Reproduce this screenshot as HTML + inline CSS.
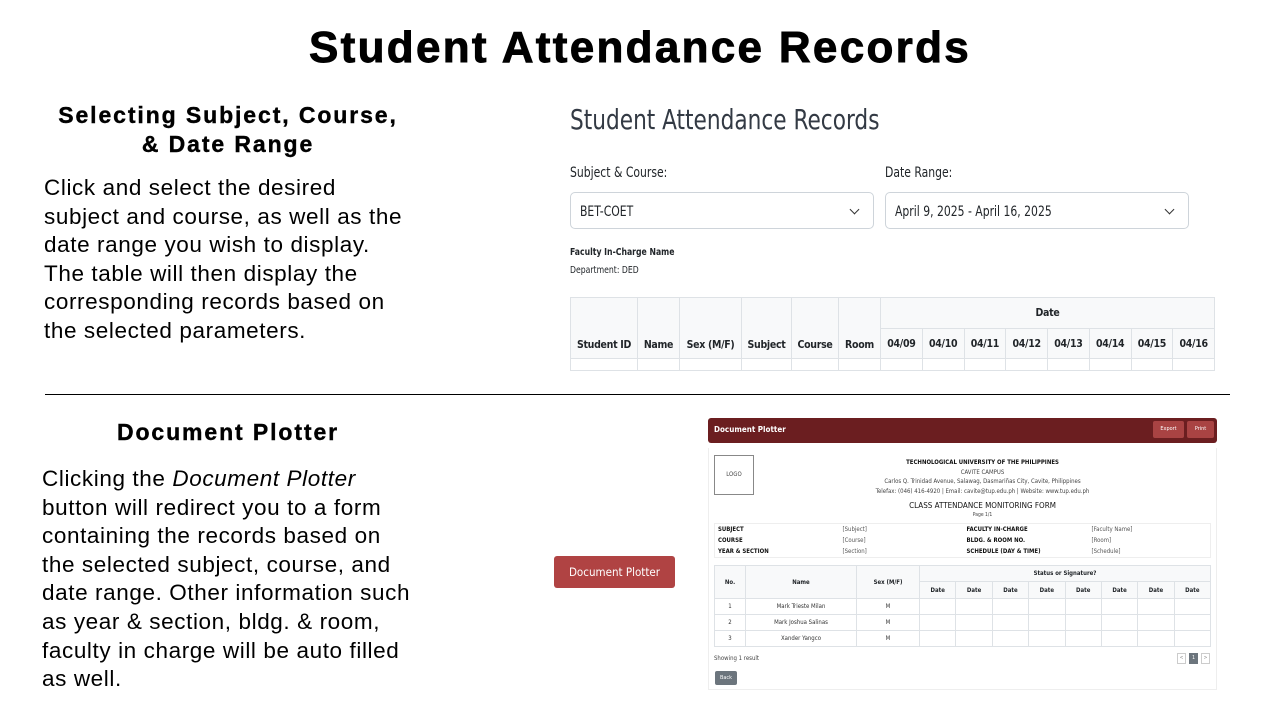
<!DOCTYPE html>
<html><head><meta charset="utf-8"><style>
*{margin:0;padding:0;box-sizing:border-box}
body{width:1280px;height:720px;background:#fff;position:relative;overflow:hidden;font-family:"Liberation Sans",Arial,sans-serif;color:#000}
.a{position:absolute}
h1{position:absolute;left:0;width:1280px;top:23px;text-align:center;font-size:44px;font-weight:bold;letter-spacing:2.3px;-webkit-text-stroke:0.9px #000}
.h2{position:absolute;text-align:center;font-weight:bold;font-size:23px;line-height:29px;letter-spacing:1.9px;-webkit-text-stroke:0.4px #000}
.p{position:absolute;font-size:22.5px;line-height:28.6px;letter-spacing:0.6px}
.ui{font-family:"DejaVu Sans Condensed","Liberation Sans",sans-serif;color:#212529}
.sx{display:inline-block;transform-origin:left center;transform:scaleX(0.86);white-space:nowrap}
table{border-collapse:collapse;position:absolute}
td,th{border:1px solid #dee2e6;text-align:center}
.t1 th{font-size:10.5px;font-weight:bold;background:#f8f9fa;letter-spacing:-0.3px}
.t3 th{font-size:6px;font-weight:bold;background:#f8f9fa}
.t3 td{font-size:6px;color:#333}
.t2 td{border:none;font-size:6px;text-align:left;padding-left:3px;color:#555}
.t2 td.b{font-weight:bold;color:#111}
.sel{position:absolute;border:1px solid #ced4da;border-radius:5px;font-size:14px;padding:11px 9px;height:37px}
.sel:after{content:"";position:absolute;right:15px;top:13px;width:6px;height:6px;border-right:1.5px solid #333;border-bottom:1.5px solid #333;transform:rotate(45deg)}
</style></head><body>
<h1>Student Attendance Records</h1>
<div class="h2" style="left:28px;width:400px;top:101px">Selecting Subject, Course,<br>&amp; Date Range</div>
<div class="p" style="left:44px;top:174px">Click and select the desired<br>subject and course, as well as the<br>date range you wish to display.<br>The table will then display the<br>corresponding records based on<br>the selected parameters.</div>
<div class="a" style="left:45px;top:394px;width:1185px;height:1px;background:#000"></div>
<div class="h2" style="left:28px;width:400px;top:418px">Document Plotter</div>
<div class="p" style="left:42px;top:465px">Clicking the <i>Document Plotter</i><br>button will redirect you to a form<br>containing the records based on<br>the selected subject, course, and<br>date range. Other information such<br>as year &amp; section, bldg. &amp; room,<br>faculty in charge will be auto filled<br>as well.</div>

<div class="ui">
<div class="a" style="left:570px;top:103px;font-size:28px;color:#333a44"><span class="sx">Student Attendance Records</span></div>
<div class="a" style="left:570px;top:165px;font-size:14px"><span class="sx">Subject &amp; Course:</span></div>
<div class="a" style="left:885px;top:165px;font-size:14px"><span class="sx">Date Range:</span></div>
<div class="sel" style="left:570px;top:192px;width:304px"><span class="sx">BET-COET</span></div>
<div class="sel" style="left:885px;top:192px;width:304px"><span class="sx">April 9, 2025 - April 16, 2025</span></div>
<div class="a" style="left:570px;top:247px;font-size:10px;font-weight:bold"><span class="sx">Faculty In-Charge Name</span></div>
<div class="a" style="left:570px;top:265px;font-size:10px"><span class="sx">Department: DED</span></div>
<table class="t1" style="left:570px;top:297px;width:645px">
<tr style="height:31px"><th rowspan="2" style="width:67px;vertical-align:bottom;padding-bottom:7px">Student ID</th><th rowspan="2" style="width:42px;vertical-align:bottom;padding-bottom:7px">Name</th><th rowspan="2" style="width:62px;vertical-align:bottom;padding-bottom:7px">Sex (M/F)</th><th rowspan="2" style="width:50px;vertical-align:bottom;padding-bottom:7px">Subject</th><th rowspan="2" style="width:47px;vertical-align:bottom;padding-bottom:7px">Course</th><th rowspan="2" style="width:42px;vertical-align:bottom;padding-bottom:7px">Room</th><th colspan="8">Date</th></tr>
<tr style="height:30px"><th>04/09</th><th>04/10</th><th>04/11</th><th>04/12</th><th>04/13</th><th>04/14</th><th>04/15</th><th>04/16</th></tr>
<tr style="height:12px"><td></td><td></td><td></td><td></td><td></td><td></td><td></td><td></td><td></td><td></td><td></td><td></td><td></td><td></td></tr>
</table>

<div class="a" style="left:554px;top:556px;width:121px;height:32px;background:#b04343;border-radius:3px;color:#fff;font-size:11.5px;text-align:center;line-height:32px">Document Plotter</div>

<div class="a" style="left:708px;top:448px;width:509px;height:242px;border:1px solid #eee;border-top:none"></div>
<div class="a" style="left:708px;top:418px;width:509px;height:25px;background:#6b1e20;border-radius:3px"></div>
<div class="a" style="left:714px;top:425px;font-size:8px;font-weight:bold;color:#fff">Document Plotter</div>
<div class="a" style="left:1153px;top:421px;width:31px;height:17px;background:#a94343;border-radius:2px;color:#fff;font-size:5.5px;text-align:center;line-height:17px">Export</div>
<div class="a" style="left:1187px;top:421px;width:27px;height:17px;background:#a94343;border-radius:2px;color:#fff;font-size:5.5px;text-align:center;line-height:17px">Print</div>
<div class="a" style="left:714px;top:455px;width:40px;height:40px;border:1px solid #888;font-size:6px;color:#444;text-align:center;line-height:38px">LOGO</div>
<div class="a" style="left:754px;top:458px;width:457px;text-align:center;font-size:6px;line-height:9.5px;color:#444"><b style="color:#111">TECHNOLOGICAL UNIVERSITY OF THE PHILIPPINES</b><br>CAVITE CAMPUS<br>Carlos Q. Trinidad Avenue, Salawag, Dasmariñas City, Cavite, Philippines<br>Telefax: (046) 416-4920 | Email: cavite@tup.edu.ph | Website: www.tup.edu.ph</div>
<div class="a" style="left:754px;top:501px;width:457px;text-align:center;font-size:8px;color:#111">CLASS ATTENDANCE MONITORING FORM</div>
<div class="a" style="left:754px;top:512px;width:457px;text-align:center;font-size:5px;color:#444">Page 1/1</div>
<table class="t2" style="left:714px;top:523px;width:497px;height:35px;border:1px solid #eee">
<tr><td class="b" style="width:125px">SUBJECT</td><td style="width:124px">[Subject]</td><td class="b" style="width:125px">FACULTY IN-CHARGE</td><td>[Faculty Name]</td></tr>
<tr><td class="b">COURSE</td><td>[Course]</td><td class="b">BLDG. &amp; ROOM NO.</td><td>[Room]</td></tr>
<tr><td class="b">YEAR &amp; SECTION</td><td>[Section]</td><td class="b">SCHEDULE (DAY &amp; TIME)</td><td>[Schedule]</td></tr>
</table>
<table class="t3" style="left:714px;top:565px;width:497px">
<tr style="height:16px"><th rowspan="2" style="width:31px">No.</th><th rowspan="2" style="width:111px">Name</th><th rowspan="2" style="width:63px">Sex (M/F)</th><th colspan="8">Status or Signature?</th></tr>
<tr style="height:17px"><th>Date</th><th>Date</th><th>Date</th><th>Date</th><th>Date</th><th>Date</th><th>Date</th><th>Date</th></tr>
<tr style="height:16px"><td>1</td><td>Mark Trieste Milan</td><td>M</td><td></td><td></td><td></td><td></td><td></td><td></td><td></td><td></td></tr>
<tr style="height:16px"><td>2</td><td>Mark Joshua Salinas</td><td>M</td><td></td><td></td><td></td><td></td><td></td><td></td><td></td><td></td></tr>
<tr style="height:16px"><td>3</td><td>Xander Yangco</td><td>M</td><td></td><td></td><td></td><td></td><td></td><td></td><td></td><td></td></tr>
</table>
<div class="a" style="left:714px;top:655px;font-size:6px;color:#444">Showing 1 result</div>
<div class="a" style="left:1177px;top:653px;width:9px;height:11px;border:1px solid #ccc;font-size:5px;text-align:center;line-height:9px;color:#888">&lt;</div>
<div class="a" style="left:1189px;top:653px;width:9px;height:11px;background:#6c757d;font-size:5px;text-align:center;line-height:11px;color:#fff">1</div>
<div class="a" style="left:1201px;top:653px;width:9px;height:11px;border:1px solid #ccc;font-size:5px;text-align:center;line-height:9px;color:#888">&gt;</div>
<div class="a" style="left:715px;top:671px;width:22px;height:14px;background:#6c757d;border-radius:2px;font-size:5.5px;text-align:center;line-height:14px;color:#fff">Back</div>
</div>
</body></html>
